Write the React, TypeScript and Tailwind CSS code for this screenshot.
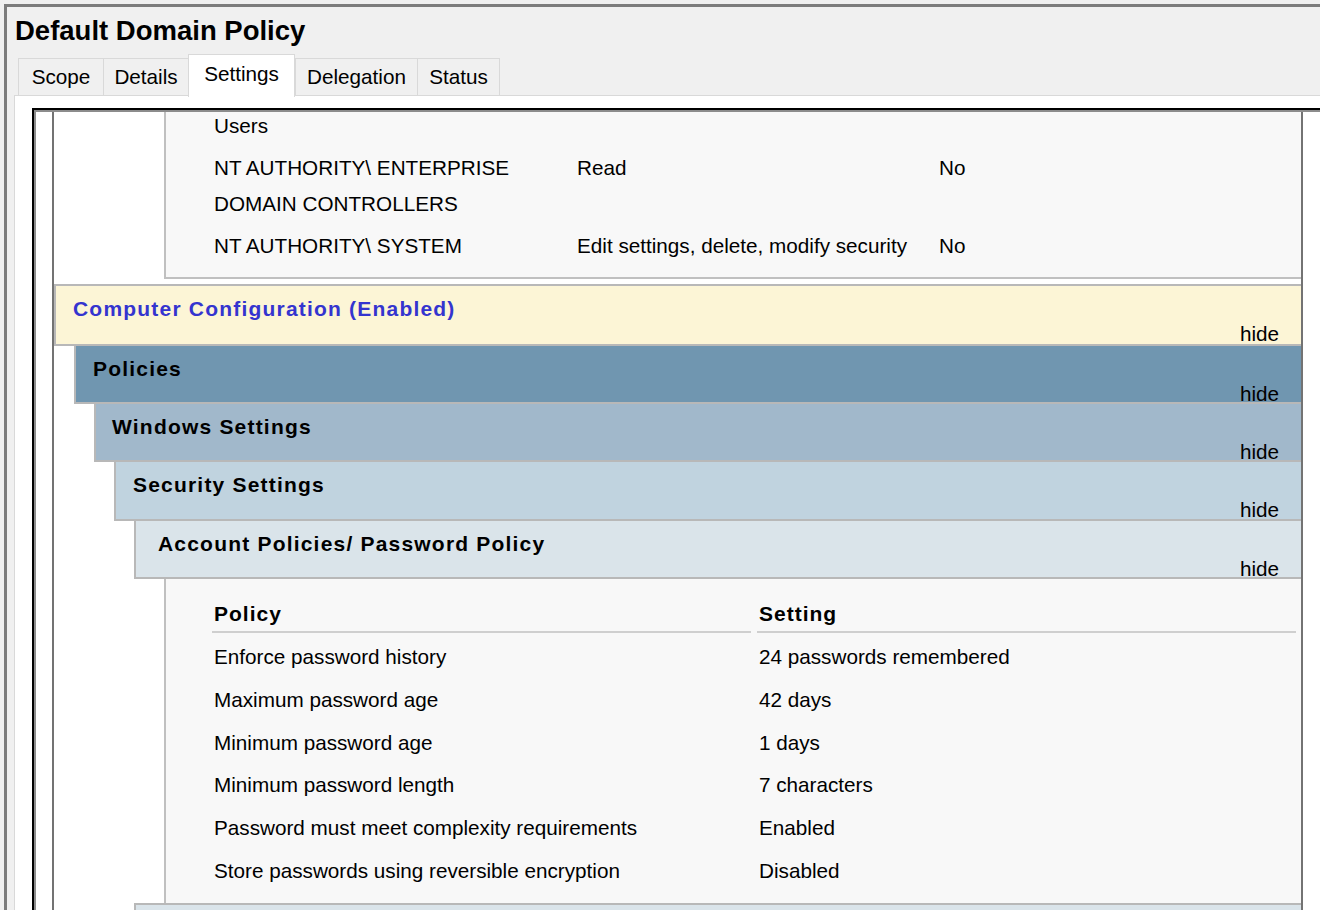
import React from "react";

const FONT = "font-['Liberation_Sans',Arial,sans-serif]";

function Tab({ label, w, selected }: { label: string; w: string; selected?: boolean }) {
  if (selected) {
    return (
      <div
        className={`${w} h-[43px] mb-[-2px] relative z-10 bg-white border-t border-l border-r border-[#d9d9d9] flex items-center justify-center pb-[4px] text-[20.7px]`}
      >
        {label}
      </div>
    );
  }
  return (
    <div
      className={`${w} h-[37px] bg-[#f0f0f0] border-t border-l border-[#d9d9d9] flex items-center justify-center text-[20.7px]`}
    >
      {label}
    </div>
  );
}

function Header({
  ml,
  bg,
  title,
  h,
  pl,
  blue,
  top,
}: {
  ml: string;
  bg: string;
  title: string;
  h: string;
  pl: string;
  blue?: boolean;
  top?: boolean;
}) {
  return (
    <div
      className={`${ml} ${bg} ${h} ${top ? "border-t-2" : ""} border-l-2 border-b-2 border-[#b8b8b8]`}
    >
      <div
        className={`${pl} pt-[10px] leading-[26px] text-[21px] font-bold tracking-[1.2px] whitespace-nowrap ${
          blue ? "text-[#3434cf]" : "text-black"
        }`}
      >
        {title}
      </div>
      <div className="mt-[2px] leading-[20px] text-[20.7px] text-right pr-[22px]">hide</div>
    </div>
  );
}

const rows: [string, string][] = [
  ["Enforce password history", "24 passwords remembered"],
  ["Maximum password age", "42 days"],
  ["Minimum password age", "1 days"],
  ["Minimum password length", "7 characters"],
  ["Password must meet complexity requirements", "Enabled"],
  ["Store passwords using reversible encryption", "Disabled"],
];

export default function App() {
  return (
    <div className={`${FONT} w-[1320px] h-[910px] overflow-hidden bg-[#f0f0f0] pt-[4px] pl-[4px] text-black`}>
      <div className="h-[906px] border-l-[3px] border-t-[3px] border-[#7c7c7c] flex flex-col">
        <div className="pl-[8px] mt-[8px] h-[32px] leading-[32px] text-[27.5px] font-bold whitespace-nowrap">
          Default Domain Policy
        </div>
        <div className="mt-[7px] pl-[11px] flex items-end h-[41px]">
          <Tab label="Scope" w="w-[85px]" />
          <Tab label="Details" w="w-[85px]" />
          <Tab label="Settings" w="w-[107px]" selected />
          <Tab label="Delegation" w="w-[122px]" />
          <div className="border-r border-[#d9d9d9] flex">
            <Tab label="Status" w="w-[82px]" />
          </div>
        </div>
        <div className="ml-[7px] flex-1 bg-white border-l border-t border-[#d9d9d9] pl-[17px] pt-[12px] overflow-hidden">
          <div className="h-full border-l-2 border-t-2 border-black">
            <div className="h-full border-l-2 border-t-2 border-[#8c8c8c] pl-[16px]">
              <div className="w-[1251px] h-full border-l-2 border-r-2 border-[#737373] text-[20.7px]">
                {/* Users box */}
                <div className="ml-[110px] bg-[#f8f8f8] border-l-2 border-b-2 border-[#c0c0c0] pl-[48px] pb-[10px]">
                  <div className="grid grid-cols-[363px_362px_1fr]">
                    <div className="leading-[28px] pb-[7px]">Users</div>
                    <div />
                    <div />
                    <div className="leading-[36px] py-[3px] whitespace-nowrap">
                      NT AUTHORITY\ ENTERPRISE
                      <br />
                      DOMAIN CONTROLLERS
                    </div>
                    <div className="leading-[36px] py-[3px]">Read</div>
                    <div className="leading-[36px] py-[3px]">No</div>
                    <div className="leading-[36px] py-[3px] whitespace-nowrap">NT AUTHORITY\ SYSTEM</div>
                    <div className="leading-[36px] py-[3px] whitespace-nowrap">
                      Edit settings, delete, modify security
                    </div>
                    <div className="leading-[36px] py-[3px]">No</div>
                  </div>
                </div>

                <div className="mt-[5px]">
                  <Header
                    ml="ml-0"
                    bg="bg-[#fcf5d6]"
                    title="Computer Configuration (Enabled)"
                    h="h-[62px]"
                    pl="pl-[17px]"
                    blue
                    top
                  />
                  <Header ml="ml-[20px]" bg="bg-[#7096b0]" title="Policies" h="h-[58px]" pl="pl-[17px]" />
                  <Header ml="ml-[40px]" bg="bg-[#a1b8cb]" title="Windows Settings" h="h-[58px]" pl="pl-[16px]" />
                  <Header ml="ml-[60px]" bg="bg-[#c0d3df]" title="Security Settings" h="h-[59px]" pl="pl-[17px]" />
                  <Header
                    ml="ml-[80px]"
                    bg="bg-[#dae4ea]"
                    title="Account Policies/ Password Policy"
                    h="h-[58px]"
                    pl="pl-[22px]"
                  />
                  <div className="ml-[110px] h-[324px] bg-[#f8f8f8] border-l-2 border-[#c0c0c0] pt-[21.5px] pl-[46px]">
                    <div className="grid grid-cols-[539px_539px] gap-x-[6px]">
                      <div className="pl-[2px] leading-[26px] pb-[4.5px] border-b-2 border-[#cfcfcf] font-bold tracking-[1px] text-[21px]">
                        Policy
                      </div>
                      <div className="pl-[2px] leading-[26px] pb-[4.5px] border-b-2 border-[#cfcfcf] font-bold tracking-[1px] text-[21px]">
                        Setting
                      </div>
                    </div>
                    <div className="pt-[3px] grid grid-cols-[539px_539px] gap-x-[6px]">
                      {rows.map(([a, b]) => (
                        <React.Fragment key={a}>
                          <div className="pl-[2px] leading-[42.8px] whitespace-nowrap">{a}</div>
                          <div className="pl-[2px] leading-[42.8px] whitespace-nowrap">{b}</div>
                        </React.Fragment>
                      ))}
                    </div>
                  </div>
                  <div className="ml-[80px] h-[40px] bg-[#dae4ea] border-t-2 border-l-2 border-[#b8b8b8]" />
                </div>
              </div>
            </div>
          </div>
        </div>
      </div>
    </div>
  );
}
